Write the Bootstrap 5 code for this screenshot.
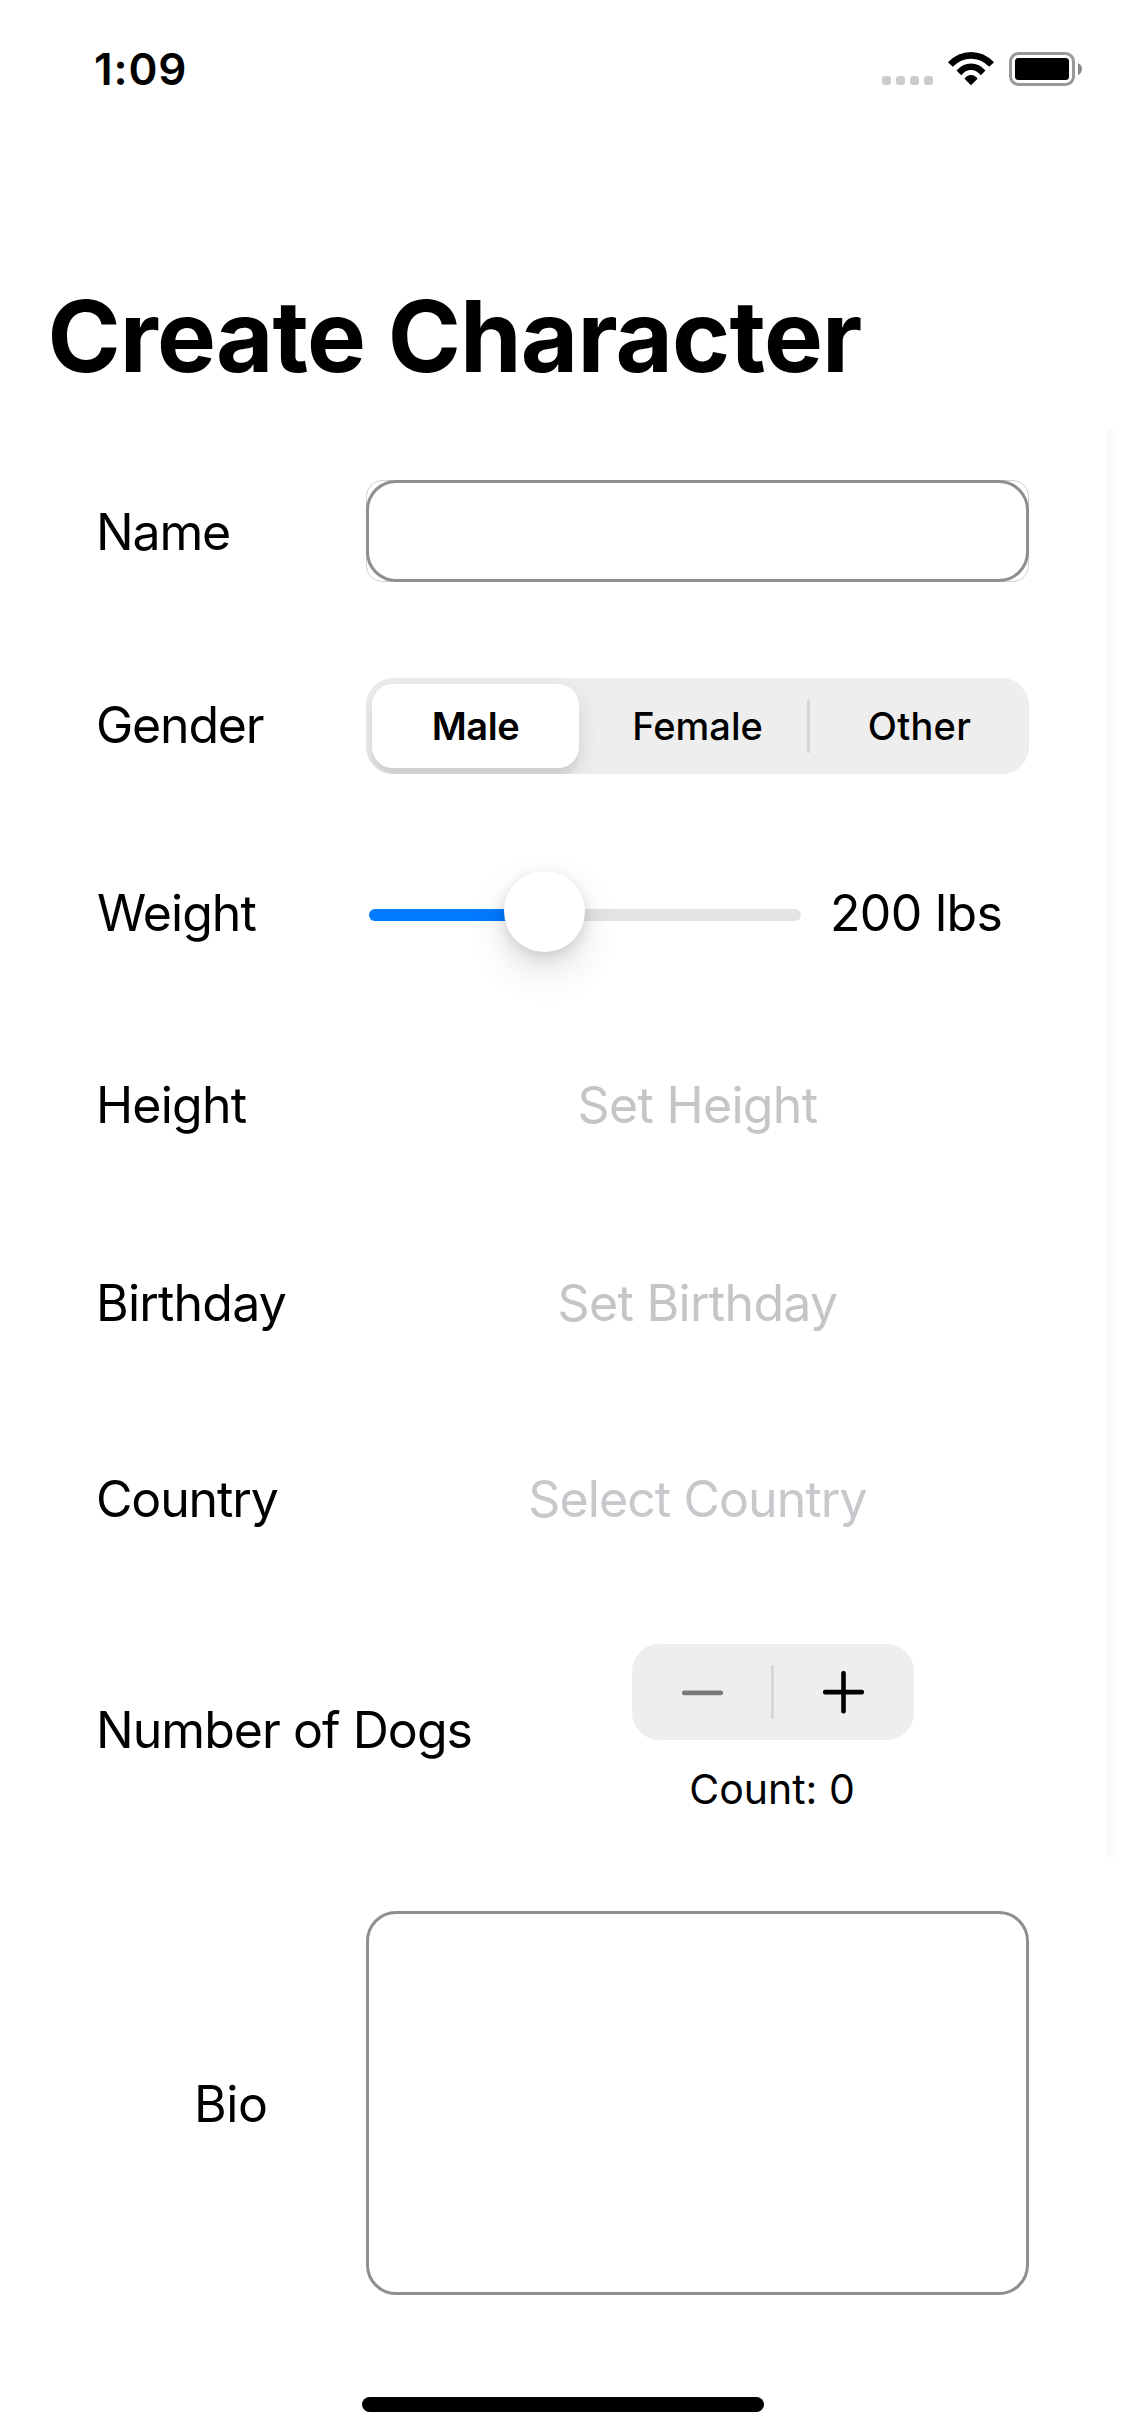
<!DOCTYPE html>
<html lang="en">
<head>
<meta charset="utf-8">
<meta name="viewport" content="width=device-width, initial-scale=1">
<title>Create Character</title>
<link rel="stylesheet" href="https://cdn.jsdelivr.net/npm/bootstrap@5.3.0/dist/css/bootstrap.min.css">
<style>
  body { font-family: Inter, "Liberation Sans", sans-serif; background: #fff; color: #000; font-size: 50px; line-height: 60px; letter-spacing: -.95px; }
  .screen { width: 1125px; height: 2436px; }
  .status-bar { height: 105px; padding: 33px 42px 0 94px; }
  .clock { font-size: 44px; line-height: 72px; font-weight: 600; letter-spacing: .9px; }
  .status-icons { width: 202px; height: 36px; margin-top: 18px; }
  .page-title { margin: 171px 0 0 47.5px; font-size: 99px; line-height: 120px; font-weight: 700; letter-spacing: -.87px; }
  .scroll-area { margin: 33px 9px 0 0; height: 1429px; }
  .form-list { padding: 51px 87px 0 96px; }
  .scroll-thumb { width: 9px; height: 1429px; background: #fafafa; border-radius: 5px; margin-left: -9px; }
  .field-label { width: 270px; margin: 0; }
  .field-side { width: 663px; }
  .row-name { height: 102px; margin-bottom: 96px; }
  .row-name .field-label { padding-top: 2px; letter-spacing: -1.18px; }
  .input-shell { height: 102px; border: 1px solid #d2d2d4; border-radius: 16px; }
  .name-input { width: 663px; height: 102px; margin: -1px; border: 3px solid #8e8e93; border-radius: 30px; background: transparent; }
  .row-gender { height: 96px; margin-bottom: 97px; }
  .row-gender .field-label { padding-bottom: 2px; letter-spacing: -1.2px; }
  .segments { height: 96px; padding: 6px; background: #eee; border-radius: 27px; font-size: 38px; letter-spacing: 0; font-weight: 500; overflow: hidden; }
  .seg { width: 222px; height: 84px; }
  .seg-on { width: 207px; background: #fff; border-radius: 21px; font-weight: 600; letter-spacing: -.4px; box-shadow: 0 9px 24px rgba(0,0,0,.12), 0 9px 3px rgba(0,0,0,.04); }
  .seg-mid { width: 228px; padding-left: 9px; }
  .seg-end { width: 212px; padding-left: 7px; letter-spacing: .3px; }
  .seg-rule { width: 3px; height: 54px; background: #d6d6d6; border-radius: 2px; }
  .row-weight { height: 81px; margin-bottom: 123px; }
  .row-weight .field-label { padding: 2px 0 0 1px; }
  .slider-track { width: 432px; height: 12px; margin: 7px 0 0 3px; background: #e4e4e6; border-radius: 6px; }
  .slider-fill { height: 12px; background: #007aff; border-radius: 6px; }
  .slider-knob { width: 81px; height: 81px; margin: -7px 0 0 -40px; background: #fff; border-radius: 50%; box-shadow: 0 18px 39px rgba(0,0,0,.13), 0 4px 14px rgba(0,0,0,.12); }
  .weight-value { margin-left: 29px; padding-top: 2px; letter-spacing: -.65px; }
  .row-height { height: 60px; margin-bottom: 138px; }
  .row-birthday { height: 60px; margin-bottom: 136px; }
  .row-height .field-label, .row-birthday .field-label { letter-spacing: -.8px; }
  .row-country { height: 60px; margin-bottom: 115px; }
  .row-country .field-label { letter-spacing: -1.15px; }
  .hint { color: #c5c5c7; letter-spacing: -.68px; }
  .hint-country { color: #c7c7cc; letter-spacing: -.92px; }
  .row-dogs { height: 171px; margin-right: 115px; }
  .stepper { width: 282px; height: 96px; background: #eee; border-radius: 27px; }
  .count-text { font-size: 41px; line-height: 50px; letter-spacing: 0; margin: 24px 2px 1px 0; }
  .row-bio { margin: 53px 0 0; padding: 0 96px 0 194px; height: 384px; }
  .bio-label { width: 172px; letter-spacing: -.4px; margin: 0; padding-top: 2px; }
  .bio-input { width: 663px; height: 384px; border: 3px solid #8e8e93; border-radius: 30px; background: transparent; resize: none; }
  .home-bar { width: 402px; height: 15px; margin: 102px auto 0; background: #000; border-radius: 8px; }
</style>
</head>
<body>
<div class="screen d-flex flex-column overflow-hidden">
  <header class="status-bar d-flex justify-content-between align-items-start flex-shrink-0">
    <span class="clock">1:09</span>
    <svg class="status-icons" viewBox="0 0 202 36" aria-hidden="true">
      <g fill="#ccc">
        <rect x="1" y="25" width="9" height="9" rx="3"/><rect x="15" y="25" width="9" height="9" rx="3"/>
        <rect x="29" y="25" width="9" height="9" rx="3"/><rect x="43" y="25" width="9" height="9" rx="3"/>
      </g>
      <path d="M67 11.2Q77 1 90 1Q103 1 113 11.2L108.2 15.8Q100.500 7.700 90 7.700Q79.500 7.700 71.800 15.8Z"/>
      <path d="M75.500 19.600Q81.500 12.500 90 12.500Q98.500 12.500 104.500 19.600L99.800 24.200Q95.500 19 90 19Q84.500 19 80.200 24.200Z"/>
      <path d="M83.500 27.700Q86 24 90 24Q94 24 96.500 27.700L90 34.200Z"/>
      <rect x="129.500" y="2.500" width="63" height="31" rx="8" fill="none" stroke="#999" stroke-width="3"/>
      <rect x="134" y="7" width="54" height="22" rx="3.500"/>
      <path d="M197 12Q201 14 201 18T197 24Z" fill="#888"/>
    </svg>
  </header>

  <h1 class="page-title text-nowrap flex-shrink-0">Create Character</h1>

  <div class="scroll-area d-flex flex-shrink-0">
    <form class="form-list flex-grow-1">
      <div class="row-name d-flex align-items-center">
        <label class="field-label" for="name">Name</label>
        <div class="field-side input-shell"><input id="name" class="name-input d-block" type="text"></div>
      </div>
      <div class="row-gender d-flex align-items-center">
        <label class="field-label">Gender</label>
        <div class="field-side segments d-flex align-items-center">
          <div class="seg seg-on d-flex align-items-center justify-content-center">Male</div>
          <div class="seg seg-mid d-flex align-items-center justify-content-center">Female</div>
          <div class="seg-rule"></div>
          <div class="seg seg-end d-flex align-items-center justify-content-center">Other</div>
        </div>
      </div>
      <div class="row-weight d-flex align-items-center">
        <label class="field-label">Weight</label>
        <div class="slider-track d-flex align-items-center flex-shrink-0">
          <div class="slider-fill flex-shrink-0" style="width: 40.5%"></div>
          <div class="slider-knob flex-shrink-0"></div>
        </div>
        <span class="weight-value text-nowrap">200 lbs</span>
      </div>
      <div class="row-height d-flex align-items-center">
        <label class="field-label">Height</label>
        <div class="field-side hint text-center">Set Height</div>
      </div>
      <div class="row-birthday d-flex align-items-center">
        <label class="field-label">Birthday</label>
        <div class="field-side hint text-center">Set Birthday</div>
      </div>
      <div class="row-country d-flex align-items-center">
        <label class="field-label">Country</label>
        <div class="field-side hint hint-country text-center">Select Country</div>
      </div>
      <div class="row-dogs d-flex align-items-center justify-content-between">
        <label class="text-nowrap">Number of Dogs</label>
        <div class="d-flex flex-column align-items-center">
          <svg class="stepper" viewBox="0 0 282 96" role="img" aria-label="Stepper">
            <rect x="139" y="21" width="3" height="54" rx="1.500" fill="#d6d6d6"/>
            <rect x="50" y="46.500" width="41" height="4.800" rx="2" fill="#777a78"/>
            <rect x="191" y="45.800" width="41" height="4.600" rx="2"/>
            <rect x="209.200" y="27" width="4.600" height="42.500" rx="2"/>
          </svg>
          <div class="count-text">Count: 0</div>
        </div>
      </div>
    </form>
    <div class="scroll-thumb flex-shrink-0"></div>
  </div>

  <div class="row-bio d-flex align-items-center flex-shrink-0">
    <label class="bio-label" for="bio">Bio</label>
    <textarea id="bio" class="bio-input d-block"></textarea>
  </div>

  <div class="home-bar flex-shrink-0"></div>
</div>
<script src="https://cdn.jsdelivr.net/npm/bootstrap@5.3.0/dist/js/bootstrap.bundle.min.js"></script>
</body>
</html>
